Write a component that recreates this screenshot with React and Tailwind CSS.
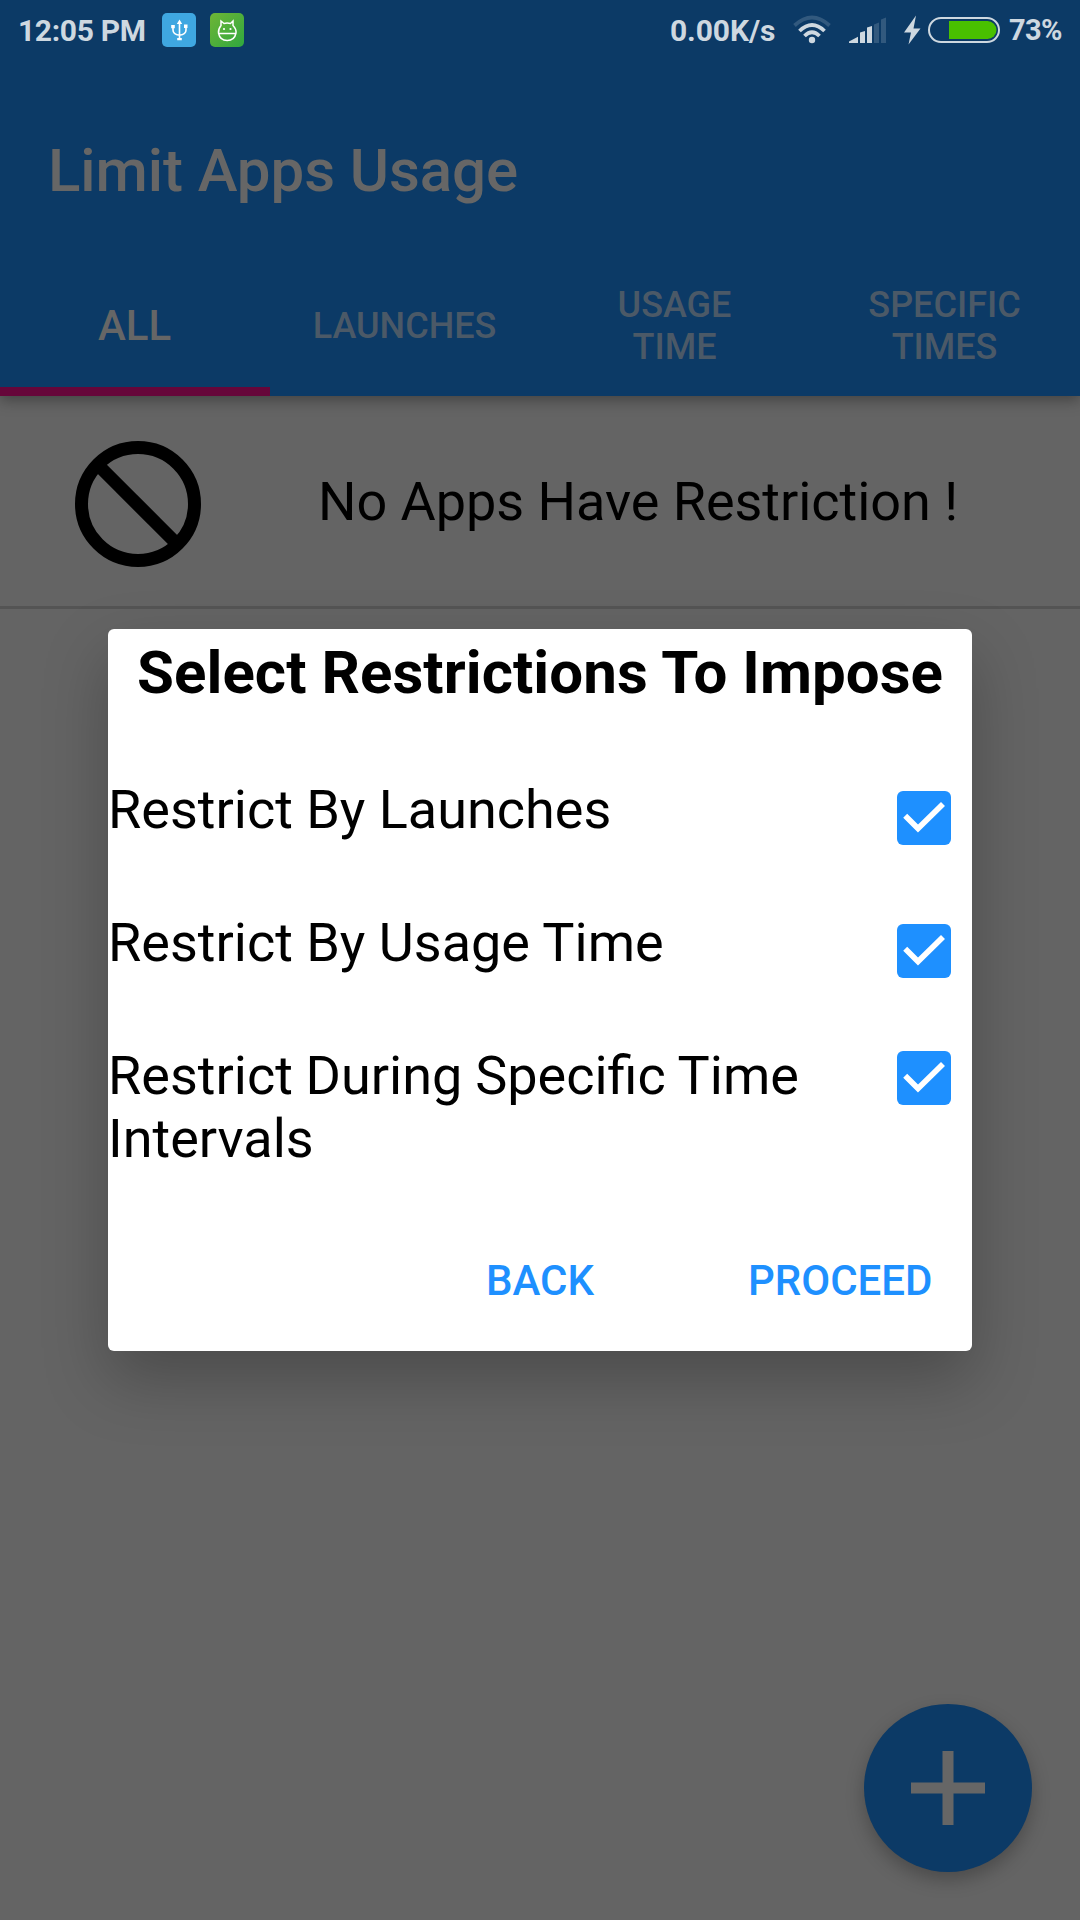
import React from "react";

function StatusBar() {
  return (
    <div className="flex h-[60px] items-start text-[30px] leading-[35px] font-bold text-[#ced8e0]">
      <span className="mt-[13px] ml-[18px] w-[144px] tracking-[-0.35px] whitespace-nowrap">12:05 PM</span>
      <svg className="mt-[13px] h-[34px] w-[34px]" viewBox="0 0 34 34" fill="none">
        <rect width="34" height="34" rx="5" fill="#3fa7e1" />
        <path d="M17.500 9v16M11 14v3q0 4.500 6.500 5.200q6.500-.7 6.500-5.200V13" stroke="#fff" strokeWidth="1.600" />
        <path d="M17.500 6.500l2.700 4.500h-5.400zM9.200 12h3.600v3.300H9.200zM22 11.500h3.500V15H22zM15.200 25h4.600v2.200h-4.600z" fill="#fff" />
      </svg>
      <svg className="mt-[13px] ml-[14px] h-[34px] w-[34px]" viewBox="0 0 34 34" fill="none">
        <defs>
          <linearGradient id="petGreen" x1="0" y1="0" x2="1" y2="1">
            <stop stopColor="#6fb536" />
            <stop offset="1" stopColor="#2fa83f" />
          </linearGradient>
        </defs>
        <rect width="34" height="34" rx="5" fill="url(#petGreen)" />
        <path d="M11 12.500V8l3 2.500q3-.8 6.500 0L23 8v4.500q3.500 3.500 3 7.500q-1.500 7.500-8.800 7.500T8.500 20q-.4-4 2.500-7.500zM8.500 20.500h17.500" stroke="#fff" strokeWidth="1.500" />
        <circle cx="14" cy="16" r="1.100" fill="#fff" />
        <circle cx="20.500" cy="16" r="1.100" fill="#fff" />
      </svg>
      <span className="mt-[13px] ml-[426px] w-[122px] tracking-[-0.1px] whitespace-nowrap">0.00K/s</span>
      <svg className="mt-[15px] h-[30px] w-[40px]" viewBox="792 15 40 30" fill="none" strokeWidth="3.800">
        <path d="M794.500 25.500Q812 9.500 829.500 25.500" stroke="#32597e" />
        <path d="M799.500 31Q812 19 824.500 31M804.500 36Q812 28.500 819.500 36" stroke="#ced8e0" />
        <circle cx="812" cy="40" r="3.200" fill="#ced8e0" />
      </svg>
      <svg className="mt-[15px] ml-[16px] h-[30px] w-[40px]" viewBox="848 15 40 30">
        <path d="M849 43v-1.500l9-4.800V43zM860 43V32.500l5-1.500v12zM867 43V27.500l5-1.500v17z" fill="#ced8e0" />
        <path d="M874 43V24.500l5-2v20.500zM881 43V19.500l5-2v25.500z" fill="#32597e" />
      </svg>
      <svg className="mt-[13px] ml-[14px] h-[34px] w-[100px]" viewBox="902 13 100 34">
        <path d="M916 15.500L904 32.500h7L908.500 44.500L920.500 28.500h-7z" fill="#ced8e0" />
        <rect x="929" y="18" width="70" height="24" rx="12" fill="none" stroke="#ced8e0" strokeWidth="2" />
        <path d="M949 21h38.500a9 9 0 0 1 0 18H949z" fill="#49c000" />
      </svg>
      <span className="mt-[13px] ml-[7px] text-[29px] tracking-[-0.7px] whitespace-nowrap">73%</span>
    </div>
  );
}

function Tab({ children, active }) {
  return (
    <div className={active
      ? "flex w-[270px] items-center justify-center pt-[2px] pr-px text-center text-[42px] leading-[49px] text-[#666666]"
      : "flex w-[270px] items-center justify-center pt-[4px] pr-px text-center text-[36px] leading-[42px] text-[#4b5967]"}>
      <span>{children}</span>
    </div>
  );
}

function CheckBox() {
  return (
    <svg className="h-[54px] w-[54px] shrink-0" viewBox="0 0 54 54">
      <rect width="54" height="54" rx="6" fill="#1e90ff" />
      <path d="M8.200 24.800L21 37.500L46 13" fill="none" stroke="#fff" strokeWidth="5.700" />
    </svg>
  );
}

function Option({ children }) {
  return <span className="w-[789px] text-[54px] leading-[63px]">{children}</span>;
}

export default function App() {
  return (
    <div className="relative flex h-[1920px] w-[1080px] flex-col overflow-hidden bg-[#646464] font-['Roboto',sans-serif]">
      <header className="relative flex h-[396px] flex-col bg-[#0c3a66] shadow-[0_4px_14px_rgba(0,0,0,0.35)]">
        <StatusBar />
        <h1 className="mt-[76px] ml-[48px] h-[116px] text-[60px] leading-[70px] font-medium tracking-[-0.08px] whitespace-nowrap text-[#666666]">
          Limit Apps Usage
        </h1>
        <nav className="flex h-[144px] font-medium">
          <Tab active>ALL</Tab>
          <Tab>LAUNCHES</Tab>
          <Tab>USAGE<br />TIME</Tab>
          <Tab>SPECIFIC<br />TIMES</Tab>
        </nav>
        <div className="absolute bottom-0 left-0 h-[9px] w-[270px] bg-[#66063a]" />
      </header>

      <section className="flex h-[213px] items-center border-b-[3px] border-[#545454]">
        <svg className="mt-[6px] ml-[75px] h-[126px] w-[126px] shrink-0" viewBox="0 0 126 126" fill="none" stroke="#000">
          <circle cx="63" cy="63" r="56.500" strokeWidth="13" />
          <path d="M25 26L100 101" strokeWidth="13" />
        </svg>
        <span className="ml-[117px] text-[54px] leading-[63px] tracking-[-0.04px] whitespace-nowrap">No Apps Have Restriction !</span>
      </section>

      <div className="absolute top-[1704px] left-[864px] flex h-[168px] w-[168px] items-center justify-center rounded-full bg-[#0c3a66] shadow-[0_8px_18px_rgba(0,0,0,0.25)]">
        <svg className="h-[74px] w-[74px]" viewBox="0 0 74 74" fill="#666666">
          <path d="M31.500 0h11v31.500H74v11H42.500V74h-11V42.500H0v-11h31.500z" />
        </svg>
      </div>

      <div className="absolute top-[629px] left-[108px] flex h-[722px] w-[864px] flex-col rounded-[6px] bg-white text-black shadow-[0_28px_64px_rgba(0,0,0,0.25)]">
        <h2 className="mt-[9px] h-[70px] text-center text-[60px] leading-[70px] font-bold tracking-[0.06px] whitespace-nowrap">
          Select Restrictions To Impose
        </h2>
        <div className="mt-[70px] flex h-[133px] items-start">
          <Option>Restrict By Launches</Option>
          <div className="mt-[13px]"><CheckBox /></div>
        </div>
        <div className="flex h-[133px] items-start">
          <Option>Restrict By Usage Time</Option>
          <div className="mt-[13px]"><CheckBox /></div>
        </div>
        <div className="flex h-[170px] items-start">
          <Option><span className="[word-spacing:-0.6px]">Restrict During Specific Time</span><br />Intervals</Option>
          <div className="mt-[7px]"><CheckBox /></div>
        </div>
        <div className="mt-[42px] flex text-[42px] leading-[49px] font-medium whitespace-nowrap text-[#1e90ff]">
          <span className="ml-[378px] w-[262px]">BACK</span>
          <span>PROCEED</span>
        </div>
      </div>
    </div>
  );
}
